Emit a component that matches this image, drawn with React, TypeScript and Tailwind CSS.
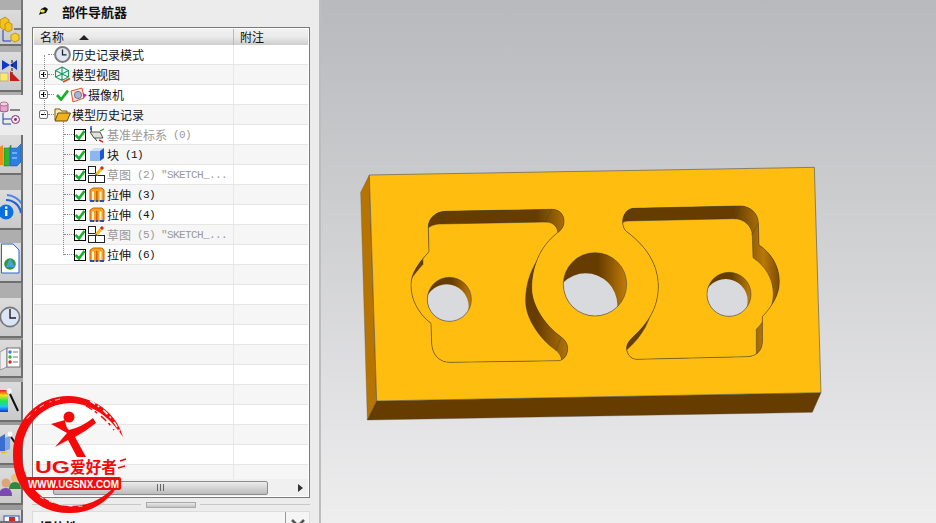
import type { ReactNode } from "react";

// ---- small tree icons ----
function ClockIcon({ size = 17 }: { size?: number }) {
    return (
        <svg width={size} height={size} viewBox="0 0 17 17" className="shrink-0">
            <circle cx="8.5" cy="8.5" r="7.4" fill="#dfe6f2" stroke="#7c7c7c" strokeWidth="2" />
            <path d="M8.5 3.5V8.8H12.5" fill="none" stroke="#222" strokeWidth="1.3" />
        </svg>
    );
}

function ViewsIcon() {
    return (
        <svg width="17" height="17" viewBox="0 0 17 17" className="shrink-0">
            <path d="M8 1L14.5 4.5V11L8 14.5L1.5 11V4.5Z M1.5 4.5L8 8L14.5 4.5 M8 1V14.5 M1.5 11L8 8L14.5 11" fill="none" stroke="#159a68" strokeWidth="1.1" />
            <path d="M9 16L16 12.5" stroke="#e8401c" strokeWidth="1.6" />
        </svg>
    );
}

function GreenCheck() {
    return (
        <svg width="13" height="12" viewBox="0 0 13 12" className="shrink-0">
            <path d="M1 6L5 10.5L12 1.5" fill="none" stroke="#18b02a" strokeWidth="2.8" />
        </svg>
    );
}

function CameraIcon() {
    return (
        <svg width="17" height="16" viewBox="0 0 17 16" className="shrink-0">
            <path d="M1 4L12 1L14 11L3 15Z" fill="#f6e2dc" stroke="#e2503a" strokeWidth="1" />
            <circle cx="8" cy="8" r="3.6" fill="#a8b6d8" stroke="#666" strokeWidth="0.8" />
            <path d="M13 6L17 8L13.5 11Z" fill="#d81fb4" />
        </svg>
    );
}

function FolderIcon() {
    return (
        <svg width="17" height="15" viewBox="0 0 17 15" className="shrink-0">
            <path d="M1 13V2H6L7.5 4H13V6" fill="#f5e7b0" stroke="#7a5a10" strokeWidth="1" />
            <path d="M1 14L4 6H16.5L13 14Z" fill="#f2b21c" stroke="#6a4a08" strokeWidth="1" />
        </svg>
    );
}

function CheckBox() {
    return (
        <span className="flex h-[12px] w-[12px] shrink-0 items-center justify-center border border-black bg-white">
            <svg width="10" height="10" viewBox="0 0 10 10">
                <path d="M0.5 5L4 8.5L9.5 1" fill="none" stroke="#12b52a" strokeWidth="2.6" />
            </svg>
        </span>
    );
}

function CsysIcon() {
    return (
        <svg width="17" height="17" viewBox="0 0 17 17" className="shrink-0">
            <path d="M3 2L3.5 8L9 15" fill="none" stroke="#333" strokeWidth="1" />
            <path d="M2 6L12 6L15 12L6 12Z" fill="#dfe3d8" stroke="#444" strokeWidth="0.9" />
            <path d="M3 0V4" stroke="#1d3fc8" strokeWidth="1.4" />
            <path d="M11 14L15 16" stroke="#d22" strokeWidth="1.4" />
            <path d="M12 5L16 3" stroke="#2a9a2a" strokeWidth="1.2" />
        </svg>
    );
}

function BlockIcon() {
    return (
        <svg width="16" height="15" viewBox="0 0 16 15" className="shrink-0">
            <path d="M1 4L5 1H15L11 4Z" fill="#cfe0f8" />
            <path d="M1 4H11V14H1Z" fill="#8fb6ef" />
            <path d="M11 4L15 1V11L11 14Z" fill="#1f58d6" />
        </svg>
    );
}

function SketchIcon() {
    return (
        <svg width="17" height="17" viewBox="0 0 17 17" className="shrink-0">
            <rect x="0.5" y="0.5" width="7" height="7" fill="#fff" stroke="#222" />
            <rect x="0.5" y="9.5" width="7" height="7" fill="#fff" stroke="#222" />
            <rect x="7.5" y="9.5" width="9" height="7" fill="#fff" stroke="#222" />
            <path d="M8 9L14 2" stroke="#f4b81c" strokeWidth="3" />
            <path d="M13 3L15 1" stroke="#d8261c" strokeWidth="3" />
            <path d="M8.5 8.5L7 10" stroke="#222" strokeWidth="1.2" />
        </svg>
    );
}

function ExtrudeIcon() {
    return (
        <svg width="16" height="16" viewBox="0 0 16 16" className="shrink-0">
            <path d="M1 3L4 1H13L15 3V14H1Z" fill="#f6a21e" stroke="#c8620c" strokeWidth="1" />
            <path d="M4 4.5V13M11.5 4.5V13" stroke="#fff2d0" strokeWidth="2" />
            <path d="M7.8 4V13" stroke="#c8620c" strokeWidth="1.4" />
            <path d="M1 14H5M7 14H9M11 14H15" stroke="#2050c8" strokeWidth="2" />
        </svg>
    );
}

// ---- tree data ----
type Row = {
    label: string;
    extra?: string;
    muted?: boolean;
    icon: ReactNode;
};

const featureRows: Row[] = [
    { label: "基准坐标系", extra: " (0)", muted: true, icon: <CsysIcon /> },
    { label: "块", extra: " (1)", icon: <BlockIcon /> },
    { label: "草图", extra: ' (2) "SKETCH_...', muted: true, icon: <SketchIcon /> },
    { label: "拉伸", extra: " (3)", icon: <ExtrudeIcon /> },
    { label: "拉伸", extra: " (4)", icon: <ExtrudeIcon /> },
    { label: "草图", extra: ' (5) "SKETCH_...', muted: true, icon: <SketchIcon /> },
    { label: "拉伸", extra: " (6)", icon: <ExtrudeIcon /> },
];

function Expander({ open }: { open?: boolean }) {
    return (
        <span className="relative flex h-[9px] w-[9px] shrink-0 items-center justify-center rounded-[2px] border border-[#777] bg-white">
            <span className="h-px w-[5px] bg-black" />
            {!open && <span className="absolute h-[5px] w-px bg-black" />}
        </span>
    );
}

function RowShell({ index, children }: { index: number; children?: ReactNode }) {
    const bg = index % 2 === 0 ? "bg-white" : "bg-[#f6f6f6]";
    return (
        <div className={`grid h-[20px] shrink-0 grid-cols-[200px_1fr] border-b border-[#e6e6e6] ${bg}`}>
            <div className="flex min-w-0 items-center border-r border-[#e8e8e8]">{children}</div>
            <div />
        </div>
    );
}

function TopRow({ index, expander, icon, label }: { index: number; expander?: ReactNode; icon: ReactNode; label: string }) {
    return (
        <RowShell index={index}>
            <span className="flex w-[20px] shrink-0 items-center pl-[5px]">
                {expander ?? <span className="w-[9px]" />}
                <span className="w-[6px] border-t border-dotted border-[#888]" />
            </span>
            {icon}
            <span className="ml-[1px] whitespace-pre text-[12px] leading-none text-[#111]">{label}</span>
        </RowShell>
    );
}

function FeatureRow({ index, row }: { index: number; row: Row }) {
    const tone = row.muted ? "text-[#999]" : "text-[#111]";
    return (
        <RowShell index={index}>
            <span className="ml-[30px] w-[10px] shrink-0 border-t border-dotted border-[#888]" />
            <CheckBox />
            <span className="ml-[2px] flex w-[17px] shrink-0 justify-center">{row.icon}</span>
            <span className={`ml-[2px] text-[12px] leading-none ${tone}`}>{row.label}</span>
            {row.extra && (
                <span className={`whitespace-pre pt-px font-['Liberation_Mono',monospace] text-[11px] leading-none tracking-[-0.6px] ${tone}`}>{row.extra}</span>
            )}
        </RowShell>
    );
}

function NavTree() {
    const emptyRows = Array.from({ length: 11 }, (_, i) => i + 11);
    return (
        <div className="relative flex min-h-0 flex-1 flex-col overflow-hidden">
            <TopRow index={0} icon={<ClockIcon />} label="历史记录模式" />
            <TopRow index={1} expander={<Expander />} icon={<ViewsIcon />} label="模型视图" />
            <RowShell index={2}>
                <span className="flex w-[22px] shrink-0 items-center pl-[5px]">
                    <Expander />
                    <span className="w-[6px] border-t border-dotted border-[#888]" />
                </span>
                <GreenCheck />
                <span className="ml-[1px]"><CameraIcon /></span>
                <span className="ml-[1px] text-[12px] leading-none text-[#111]">摄像机</span>
            </RowShell>
            <TopRow index={3} expander={<Expander open />} icon={<FolderIcon />} label="模型历史记录" />
            {featureRows.map((row, i) => (
                <FeatureRow key={i} index={i + 4} row={row} />
            ))}
            {emptyRows.map((i) => (
                <RowShell key={i} index={i} />
            ))}
            {/* tree connector lines */}
            <span className="absolute left-[10px] top-[10px] h-[60px] border-l border-dotted border-[#888]" />
            <span className="absolute left-[29px] top-[76px] h-[134px] border-l border-dotted border-[#888]" />
        </div>
    );
}

function ScrollBar() {
    return (
        <div className="flex h-[17px] shrink-0 items-center bg-[#f0f0f0]">
            <div className="ml-[19px] flex h-[14px] w-[215px] items-center justify-center rounded-[2px] border border-[#8c8c8c] bg-linear-to-b from-[#ececec] to-[#bcbcbc]">
                <span className="h-[7px] w-[7px] border-x border-[#666] bg-[linear-gradient(90deg,transparent_45%,#666_45%,#666_55%,transparent_55%)]" />
            </div>
            <div className="ml-[30px] h-0 w-0 border-y-[4px] border-l-[5px] border-y-transparent border-l-[#333]" />
        </div>
    );
}

// ---- left rail ----
function Band({ h }: { h: string }) {
    return <div className={`${h} w-[23px] shrink-0 border-r-2 border-[#777] bg-[#aeaeae]`} />;
}

function Tile({ h, active, children }: { h: string; active?: boolean; children: ReactNode }) {
    return (
        <div
            className={`${h} w-[23px] shrink-0 overflow-hidden ${
                active ? "bg-[#ececec]" : "border-r-2 border-b-2 border-[#6f6f6f] bg-linear-to-b from-[#dcdcdc] to-[#cacaca]"
            }`}
        >
            {children}
        </div>
    );
}

function Rail() {
    return (
        <div className="flex h-[523px] w-[23px] shrink-0 flex-col overflow-hidden">
            <Band h="h-[10px]" />
            <Tile h="h-[36px]">
                <svg width="23" height="36" viewBox="0 0 23 36">
                    <path d="M0 10L5 7L9 10V17L4 20L0 17Z" fill="#f4c21c" stroke="#b8860b" strokeWidth="0.8" />
                    <path d="M5 14L8 12L12 14V20L8 22L5 20Z" fill="#f4c21c" stroke="#b8860b" strokeWidth="0.8" />
                    <path d="M11 25L15 23L19 25V30L15 32L11 30Z" fill="#f6d02a" stroke="#b8860b" strokeWidth="0.8" />
                    <path d="M3 20V31H11" fill="none" stroke="#1c3fc0" strokeWidth="1" />
                    <path d="M14 19H21" stroke="#222" strokeWidth="1" />
                </svg>
            </Tile>
            <Band h="h-[6px]" />
            <Tile h="h-[40px]">
                <svg width="23" height="40" viewBox="0 0 23 40">
                    <path d="M2 8L10 13L2 18Z M17 8L10 13L17 18Z" fill="#1438c8" />
                    <path d="M12 8V29" stroke="#111" strokeWidth="1" strokeDasharray="3 1" />
                    <rect x="0" y="21" width="8" height="8" fill="#fbe96a" stroke="#999" strokeWidth="0.6" />
                    <path d="M10 29V19L20 29Z" fill="#c81c1c" />
                </svg>
            </Tile>
            <Band h="h-[3px]" />
            <Tile h="h-[40px]" active>
                <svg width="23" height="40" viewBox="0 0 23 40">
                    <path d="M0 9H8V16Q4 18 0 16Z" fill="#e4a8c8" stroke="#8a3a70" strokeWidth="0.8" />
                    <ellipse cx="4" cy="9" rx="4" ry="2" fill="#f2cfe2" stroke="#8a3a70" strokeWidth="0.6" />
                    <path d="M10 15H20" stroke="#222" strokeWidth="1" />
                    <path d="M3 18V29H11M3 24H11" fill="none" stroke="#1c3fc0" strokeWidth="1" />
                    <circle cx="15.5" cy="24.5" r="4" fill="none" stroke="#8a2a70" strokeWidth="1" />
                    <circle cx="15.5" cy="24.5" r="1.4" fill="#8a2a70" />
                </svg>
            </Tile>
            <Tile h="h-[40px]">
                <svg width="23" height="40" viewBox="0 0 23 40">
                    <path d="M0 12L3 10V30H0Z" fill="#f08a1c" />
                    <path d="M4 13H9L11 10V29L9 31H4Z" fill="#2eb82e" stroke="#157015" strokeWidth="0.5" />
                    <path d="M10 13H17L21 9V27L17 31H10Z" fill="#2a7fe0" stroke="#14509a" strokeWidth="0.5" />
                    <path d="M12 18H17M12 23H17" stroke="#bcdcff" strokeWidth="1" />
                </svg>
            </Tile>
            <Band h="h-[15px]" />
            <Tile h="h-[40px]">
                <svg width="23" height="40" viewBox="0 0 23 40">
                    <path d="M6 10A15 15 0 0 1 21 23" fill="none" stroke="#2060d8" strokeWidth="2.2" />
                    <path d="M7 5A20 20 0 0 1 22 14" fill="none" stroke="#4a86e8" strokeWidth="2" />
                    <circle cx="6" cy="22" r="7.5" fill="#0a6fe0" />
                    <rect x="5" y="20" width="2.4" height="6" fill="#fff" />
                    <rect x="5" y="16.5" width="2.4" height="2.2" fill="#fff" />
                </svg>
            </Tile>
            <Band h="h-[13px]" />
            <Tile h="h-[40px]">
                <svg width="23" height="40" viewBox="0 0 23 40">
                    <path d="M1.5 1H13L19 7V30H1.5Z" fill="#fff" stroke="#2a62d8" strokeWidth="1" />
                    <circle cx="10" cy="21" r="5.8" fill="#2f9a3a" />
                    <path d="M10 15L15 24H6Z" fill="#4aa0d8" />
                </svg>
            </Tile>
            <Band h="h-[15px]" />
            <Tile h="h-[40px]">
                <svg width="23" height="40" viewBox="0 0 23 40">
                    <circle cx="10" cy="19" r="9.6" fill="#dbe5f6" stroke="#777" strokeWidth="1.6" />
                    <path d="M10 11V20H16" fill="none" stroke="#222" strokeWidth="1.4" />
                </svg>
            </Tile>
            <div className="h-[2px] w-[23px] shrink-0 bg-[#999]" />
            <Tile h="h-[38px]">
                <svg width="23" height="38" viewBox="0 0 23 38">
                    <path d="M0 12L7 8V27L0 30Z" fill="#eee" stroke="#888" strokeWidth="0.8" />
                    <rect x="7" y="8" width="13" height="19" fill="#fff" stroke="#555" strokeWidth="0.8" />
                    <circle cx="10" cy="12" r="1.7" fill="#2a7fe0" />
                    <circle cx="10" cy="17" r="1.7" fill="#2eb82e" />
                    <circle cx="10" cy="22" r="1.7" fill="#d8261c" />
                    <path d="M13 12H18M13 17H18M13 22H18" stroke="#555" strokeWidth="0.8" />
                </svg>
            </Tile>
            <div className="h-[4px] w-[23px] shrink-0 bg-[#aaa]" />
            <Tile h="h-[40px]">
                <svg width="23" height="40" viewBox="0 0 23 40">
                    <defs>
                        <linearGradient id="rainbow" x1="0" y1="0" x2="0" y2="1">
                            <stop offset="0" stopColor="#e81c1c" />
                            <stop offset="0.25" stopColor="#f4e01c" />
                            <stop offset="0.5" stopColor="#1ce84a" />
                            <stop offset="0.75" stopColor="#1cc8f0" />
                            <stop offset="1" stopColor="#1c2ae8" />
                        </linearGradient>
                    </defs>
                    <rect x="0" y="8" width="8" height="22" fill="url(#rainbow)" />
                    <path d="M10 12L18 29" stroke="#111" strokeWidth="2" />
                    <circle cx="9" cy="9" r="2.5" fill="#fff" />
                </svg>
            </Tile>
            <div className="h-[3px] w-[23px] shrink-0 bg-[#999]" />
            <Tile h="h-[40px]">
                <svg width="23" height="40" viewBox="0 0 23 40">
                    <path d="M0 12L5 9V26H0Z" fill="#3a6fd0" />
                    <path d="M5 13L10 11V24L5 26Z" fill="#7aa4e4" />
                    <path d="M0 26L8 27L2 29Z" fill="#e8c01c" />
                    <circle cx="10" cy="9" r="2.4" fill="#fff" />
                    <path d="M11 12L16 19" stroke="#111" strokeWidth="2" />
                </svg>
            </Tile>
            <div className="h-[3px] w-[23px] shrink-0 bg-[#999]" />
            <Tile h="h-[37px]">
                <svg width="23" height="37" viewBox="0 0 23 37">
                    <circle cx="15" cy="10" r="4" fill="#e8c07a" />
                    <path d="M9 21Q9 14 15 14Q21 14 21 21Z" fill="#2e8a3a" />
                    <circle cx="6" cy="15" r="4.5" fill="#d8a878" />
                    <path d="M-1 28Q-1 20 6 20Q12 20 12 28Z" fill="#7a4ab0" />
                </svg>
            </Tile>
            <div className="h-[5px] w-[23px] shrink-0 bg-[#999]" />
            <Tile h="h-[13px]">
                <svg width="23" height="13" viewBox="0 0 23 13">
                    <rect x="4" y="6" width="15" height="7" fill="#fff" stroke="#2a4ac8" />
                    <rect x="9" y="7" width="6" height="6" fill="#d8261c" />
                </svg>
            </Tile>
        </div>
    );
}

// ---- watermark ----
function Watermark() {
    return (
        <svg className="pointer-events-none absolute left-0 top-[385px]" width="140" height="138" viewBox="0 385 140 138">
            {/* brush ring, open on the right side */}
            <path
                fill="#f40a0a"
                d="M123 437C118 418 100 398 70 396C38 395 13 420 13 455C13 490 38 513 68 513C92 514 112 500 122 478C108 497 90 507 68 506C42 504 23 484 22 456C21 426 42 404 70 403C95 404 112 420 123 437Z"
            />
            <path d="M60 399Q38 404 26 420" fill="none" stroke="#fff" strokeWidth="0.9" strokeDasharray="5 4 2 6" />
            <path d="M90 401Q110 412 120 432" fill="none" stroke="#fff" strokeWidth="1.5" strokeDasharray="6 3 2 5" />
            <path d="M86 406Q104 416 114 430" fill="none" stroke="#f40a0a" strokeWidth="1.4" strokeDasharray="7 3 3 5" />
            <path d="M40 497Q60 508 84 506" fill="none" stroke="#fff" strokeWidth="0.8" strokeDasharray="4 6" />
            <path d="M118 468L125 466M120 461L126 459" stroke="#f40a0a" strokeWidth="1.6" />
            <circle cx="69" cy="417" r="5.5" fill="#f40a0a" />
            <path d="M51 424L65 420Q66 428 69 430Q82 427 93 418L96 423Q86 431 75 437L86 457L77 457L68 440L55 447L67 433Z" fill="#f40a0a" />
            <text x="35" y="473" fontFamily="'Liberation Sans', sans-serif" fontWeight="700" fontSize="17" fill="#f40a0a" textLength="35" lengthAdjust="spacingAndGlyphs">UG</text>
            <text x="70" y="473" fontFamily="'Noto Sans CJK SC', sans-serif" fontWeight="700" fontSize="16" fill="#f40a0a" textLength="47" lengthAdjust="spacingAndGlyphs">爱好者</text>
            <rect x="26" y="477" width="95" height="13" rx="2" fill="#f40a0a" />
            <text x="28" y="487.5" fontFamily="'Liberation Sans', sans-serif" fontWeight="700" fontSize="10.5" fill="#fff" textLength="91" lengthAdjust="spacingAndGlyphs">WWW.UGSNX.COM</text>
        </svg>
    );
}

// ---- 3D part, coordinates follow a 3x grid of the viewport region ----
const leftPocket =
    "M285 154L605 148C630 148 642 165 642 185C642 200 632 212 620 220C570 260 545 320 545 385C545 440 590 500 632 530C646 540 653 552 653 565C653 585 642 601 625 602L300 607C268 607 247 585 245 550L243 490C205 460 183 420 183 375C183 340 205 310 237 275L235 200C235 175 258 155 285 154Z";
const rightPocket =
    "M850 145L1170 138C1200 138 1225 160 1225 190L1227 255C1265 280 1288 320 1288 365C1288 405 1265 440 1237 470L1237 545C1237 572 1218 590 1190 590L860 598C843 598 830 582 830 565C830 550 840 540 850 530C895 490 925 440 925 380C925 310 885 255 830 215C822 208 818 198 818 185C818 165 832 146 850 145Z";

function Pocket({ d, id }: { d: string; id: string }) {
    return (
        <g>
            <clipPath id={id}>
                <path d={d} />
            </clipPath>
            <path d={d} fill="#663c00" />
            <g clipPath={`url(#${id})`}>
                <rect x="0" y="0" width="1440" height="810" fill={`url(#${id}-wall)`} />
                <path d={d} transform="translate(-18 38)" fill="#ffbd10" stroke="#3a3a3a" strokeWidth="1.4" />
            </g>
            <path d={d} fill="none" stroke="#3a4048" strokeWidth="1.6" />
        </g>
    );
}

function Hole({ cx, cy, r, dx, dy, id }: { cx: number; cy: number; r: number; dx: number; dy: number; id: string }) {
    return (
        <g>
            <clipPath id={id}>
                <circle cx={cx} cy={cy} r={r} />
            </clipPath>
            <circle cx={cx} cy={cy} r={r} fill={`url(#${id}-g)`} />
            <linearGradient id={`${id}-g`} gradientUnits="userSpaceOnUse" x1={cx - r} y1={cy} x2={cx + r} y2={cy}>
                <stop offset="0.55" stopColor="#663c00" />
                <stop offset="1" stopColor="#c07c08" />
            </linearGradient>
            <g clipPath={`url(#${id})`}>
                <circle cx={cx + dx} cy={cy + dy} r={r} fill="#d8dadd" />
            </g>
            <circle cx={cx} cy={cy} r={r} fill="none" stroke="#3a4048" strokeWidth="1.6" />
        </g>
    );
}

function Part() {
    return (
        <svg className="h-full w-full" viewBox="321 0 615 523">
            <defs>
                <linearGradient id="left-wall" gradientUnits="userSpaceOnUse" x1="0" y1="0" x2="660" y2="0">
                    <stop offset="0.85" stopColor="#663c00" />
                    <stop offset="1" stopColor="#b87808" />
                </linearGradient>
                <linearGradient id="right-wall" gradientUnits="userSpaceOnUse" x1="800" y1="0" x2="1290" y2="0">
                    <stop offset="0.72" stopColor="#663c00" />
                    <stop offset="0.9" stopColor="#b87808" />
                    <stop offset="1" stopColor="#7a4a04" />
                </linearGradient>
            </defs>
            <g transform="translate(350 160) scale(0.33333)">
                <path d="M58 45L32 97L52 780L80 723Z" fill="#b87400" stroke="#555" strokeWidth="1" />
                <path d="M80 723L52 780L1387 757L1413 698Z" fill="#663c00" stroke="#444" strokeWidth="1" />
                <path d="M58 45L1393 22L1413 698L80 723Z" fill="#ffbd10" stroke="#4a5058" strokeWidth="1.8" />
                <Pocket d={leftPocket} id="left" />
                <Pocket d={rightPocket} id="right" />
                <path d="M285 154L272 190M605 148L585 187M850 145L835 183M1170 138L1155 178M1225 190L1205 225M632 535L617 572" stroke="#3a4048" strokeWidth="1.4" />
                <Hole cx={298} cy={418} r={66} dx={-8} dy={21} id="hole-a" />
                <Hole cx={735} cy={373} r={95} dx={-28} dy={62} id="hole-b" />
                <Hole cx={1137} cy={403} r={66} dx={-10} dy={20} id="hole-c" />
            </g>
        </svg>
    );
}

export default function App() {
    return (
        <div className="relative flex h-[523px] w-[936px] overflow-hidden bg-[#ececec] font-['Noto_Sans_CJK_SC',sans-serif]">
            <Rail />

            {/* part navigator panel */}
            <div className="flex w-[298px] shrink-0 flex-col border-r-2 border-[#bdbdbd] pl-[9px] pr-[9px]">
                <div className="flex h-[27px] shrink-0 items-center pb-[5px] pl-[6px]">
                    <svg width="11" height="11" viewBox="0 0 11 11">
                        <path d="M1 9L3 3L7 1L10 3L8 7L3 8Z" fill="#111" />
                        <ellipse cx="4.5" cy="5" rx="2.3" ry="1.6" fill="#f2ee3c" />
                    </svg>
                    <span className="ml-[13px] text-[13px] font-bold leading-none text-[#111]">部件导航器</span>
                </div>

                <div className="flex h-[471px] shrink-0 flex-col border border-[#7a7a7a] bg-white p-px">
                    <div className="grid h-[16px] shrink-0 grid-cols-[200px_1fr] bg-linear-to-b from-[#f2f2f2] via-[#eaeaea] to-[#cdcdcd]">
                        <div className="flex items-center border-r border-[#bbb] pl-[6px]">
                            <span className="text-[12px] leading-none text-[#111]">名称</span>
                            <span className="ml-[15px] h-0 w-0 border-x-[5px] border-b-[5px] border-x-transparent border-b-[#222]" />
                        </div>
                        <div className="flex items-center pl-[6px]">
                            <span className="text-[12px] leading-none text-[#111]">附注</span>
                        </div>
                    </div>
                    <NavTree />
                    <ScrollBar />
                </div>

                {/* splitter */}
                <div className="flex h-[13px] shrink-0 items-center justify-between">
                    <span className="h-px w-[109px] bg-[#c8c8c8]" />
                    <span className="h-[6px] w-[50px] border border-[#aaa] bg-linear-to-b from-[#e8e8e8] to-[#c4c4c4]" />
                    <span className="h-px w-[110px] bg-[#c8c8c8]" />
                </div>

                {/* dependencies panel */}
                <div className="flex min-h-0 flex-1 overflow-hidden border-x border-t border-[#dcdcdc] bg-[#f5f5f5]">
                    <div className="flex-1 border-r border-[#999] pl-[6px] pt-[1px]">
                        <span className="text-[13px] font-bold leading-none text-[#111]">相依性</span>
                    </div>
                    <div className="flex w-[23px] justify-center pt-[7px]">
                        <svg width="14" height="10" viewBox="0 0 14 10">
                            <path d="M1 1L7 7L13 1" fill="none" stroke="#555" strokeWidth="2.6" />
                        </svg>
                    </div>
                </div>
            </div>

            {/* graphics window */}
            <div className="min-w-0 flex-1 bg-linear-to-b from-[#b8b9bc] to-[#eeeeef]">
                <Part />
            </div>

            <Watermark />
        </div>
    );
}
